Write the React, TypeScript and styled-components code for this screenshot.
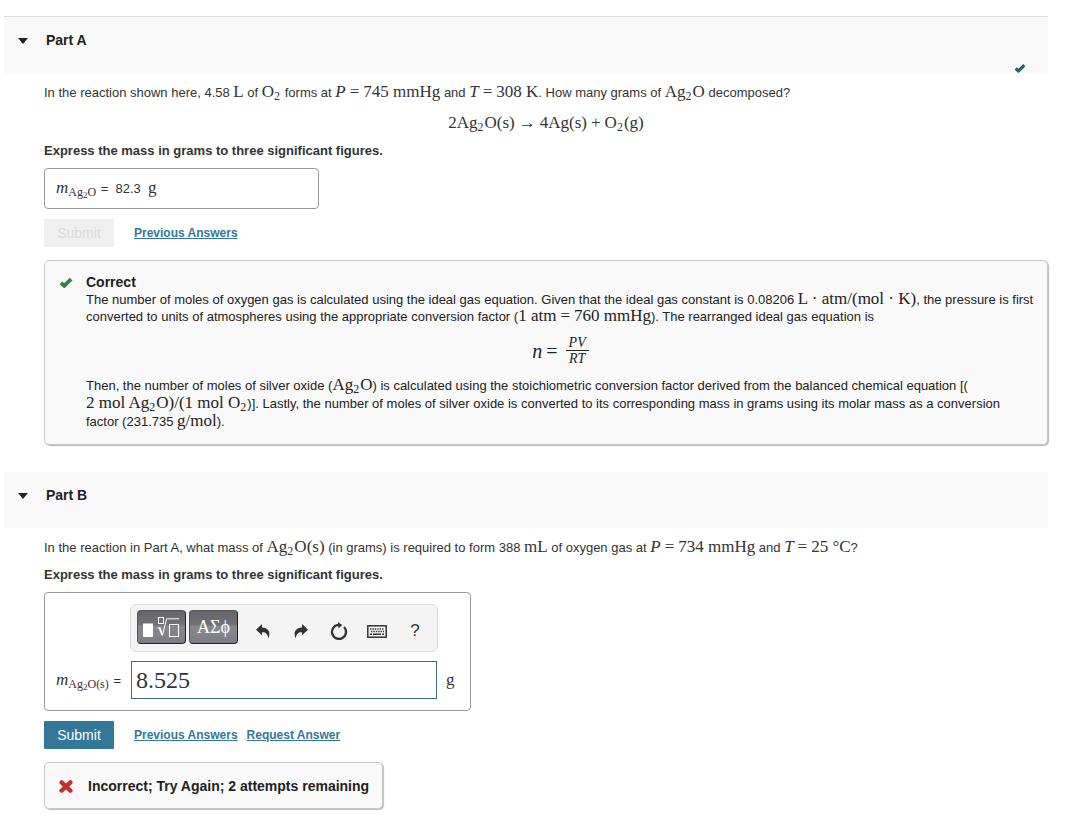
import React from 'react';
import styled, { createGlobalStyle, css } from 'styled-components';

const sans = '"Liberation Sans", Arial, sans-serif';
const serif = '"Liberation Serif", "Times New Roman", serif';

const GlobalStyle = createGlobalStyle`
  *, *::before, *::after { box-sizing: border-box; }
  body {
    margin: 0;
    background: #fff;
    color: #333;
    font: 13px/17px ${sans};
  }
  h2, h3, p { margin: 0; }
  button { font-family: inherit; cursor: pointer; }
`;

const Page = styled.main`
  padding: 16px 24px 20px 4px;
`;

const Part = styled.section`
  & + & { margin-top: 27px; }
`;

const PartHeader = styled.header<{ $ruled?: boolean }>`
  display: flex;
  align-items: flex-start;
  background: #f9f9f9;
  min-height: 56px;
  padding: 15px 22px 0 14px;
  ${p => p.$ruled && css`
    min-height: 57px;
    border-top: 1px solid #dcdcdc;
  `}
`;

const Toggle = styled.button`
  display: flex;
  align-items: center;
  gap: 17px;
  padding: 0;
  border: 0;
  background: none;
  color: #222;
  font-size: 14px;
  font-weight: bold;
  line-height: 17px;
`;

const HeaderMark = styled.span`
  display: flex;
  align-self: flex-end;
  margin-left: auto;
`;

const PartBody = styled.div`
  padding: 11px 0 0 40px;
`;

const Question = styled.p`
  margin-bottom: 10px;
`;

const Instruction = styled.p`
  font-weight: bold;
  margin-bottom: 9px;
`;

const MathText = styled.span`
  font-family: ${serif};
  font-size: 17px;
  line-height: 0;
  white-space: nowrap;
`;

const Equation = styled.div`
  display: flex;
  justify-content: center;
  align-items: center;
  font-family: ${serif};
  font-size: 17px;
  line-height: 18px;
  margin: 13px 0 10px;
`;

const Sub = styled.span`
  font-size: 12px;
  line-height: 0;
  vertical-align: -3px;
  margin-right: 1px;
`;

const SubSub = styled.span`
  font-size: 9px;
  line-height: 0;
  vertical-align: -2px;
`;

const Op = styled.span`
  padding: 0 4px;
`;

const AnswerBox = styled.div`
  display: flex;
  align-items: center;
  width: 275px;
  max-width: 100%;
  height: 41px;
  padding: 0 11px;
  border: 1px solid #999;
  border-radius: 4px;
  white-space: pre;
`;

const EditorBox = styled.div`
  display: inline-grid;
  grid-template-columns: 66px 308px auto;
  align-items: center;
  gap: 9px 8px;
  padding: 11px 15px 11px 11px;
  border: 1px solid #999;
  border-radius: 4px;
  vertical-align: top;
`;

const EditorLabel = styled.label`
  grid-column: 1;
  white-space: nowrap;
`;

const Toolbar = styled.div`
  grid-column: 2;
  display: flex;
  height: 48px;
  padding: 5px 0 5px 6px;
  background: #f4f4f4;
  border: 1px solid #dedede;
  border-radius: 6px;
`;

const PaletteButton = styled.button`
  flex: none;
  display: flex;
  align-items: center;
  justify-content: center;
  width: 49px;
  height: 34px;
  padding: 0;
  margin-right: 3px;
  border: 1px solid #555;
  border-right-color: #222;
  border-bottom-color: #222;
  border-radius: 4px;
  background: linear-gradient(#66666a, #727277 45%, #88888e 46%, #7d7d84);
  color: #fff;
  font: 18px/20px ${serif};
`;

const Tools = styled.div`
  display: flex;
  margin-left: 3px;
`;

const ToolButton = styled.button`
  flex: none;
  display: flex;
  align-items: center;
  justify-content: center;
  width: 38px;
  height: 34px;
  padding: 8px 0 0;
  border: 0;
  background: none;
  color: #333;
  font-size: 17px;
  line-height: 20px;
`;

const AnswerInput = styled.input`
  width: 306px;
  height: 38px;
  padding: 0 4px;
  margin-left: 1px;
  border: 1px solid #3b6f8c;
  background: #fff;
  color: #333;
  font: 24px/28px ${serif};
  outline: none;
`;

const Actions = styled.div`
  display: flex;
  align-items: center;
  gap: 9px;
  margin: 10px 0 13px;
`;

const SubmitButton = styled.button`
  width: 70px;
  height: 28px;
  padding: 0;
  margin-right: 11px;
  border: 0;
  border-radius: 1px;
  background: #347899;
  color: #fff;
  font-size: 14px;
  &:disabled {
    background: #f0f0f0;
    color: #dadada;
  }
`;

const ActionLink = styled.a`
  color: #347899;
  font-size: 12px;
  font-weight: bold;
  text-decoration: underline;
`;

const panel = css`
  background: #f9f9f9;
  border: 1px solid #c6c6c6;
  border-radius: 5px;
  box-shadow: 1px 1px 1px #bbb;
`;

const Feedback = styled.div`
  ${panel}
  display: flex;
  gap: 13px;
  padding: 13px 12px 13px 14px;
  color: #222;
`;

const FeedbackMark = styled.span`
  flex: none;
  display: flex;
  align-items: center;
  height: 16px;
`;

const FeedbackText = styled.div`
  flex: 1;
  min-width: 0;
`;

const FeedbackTitle = styled.h3`
  font-size: 14px;
  line-height: 17px;
`;

const FeedbackConclusion = styled.p`
  line-height: 18px;
`;

const FeedbackEquation = styled(Equation)`
  margin: 8px 0 9px;
  height: 35px;
  font-size: 20px;
`;

const Fraction = styled.span`
  display: inline-flex;
  flex-direction: column;
  align-items: center;
  margin-left: 4px;
  font-size: 14px;
  line-height: 15px;
  font-style: italic;
`;

const Numerator = styled.span`
  padding: 0 3px;
  border-bottom: 1px solid #222;
`;

const RetryNotice = styled.div`
  ${panel}
  display: inline-flex;
  align-items: center;
  gap: 15px;
  height: 47px;
  padding: 1px 13px 0 14px;
  color: #222;
  font-size: 14px;
  font-weight: bold;
`;

const Caret = () => (
  <svg width="11" height="6" viewBox="0 0 11 6" aria-hidden="true">
    <path d="M0 0H10L5 6Z" fill="#222" />
  </svg>
);

const Check = ({ width, height, color }: { width: number; height: number; color: string }) => (
  <svg width={width} height={height} viewBox="0 0 14 11" aria-hidden="true">
    <path d="M1.9 5.9L5.2 8.9L12.1 2.1" fill="none" stroke={color} strokeWidth="3.7" />
  </svg>
);

const Cross = () => (
  <svg width="14" height="13" viewBox="0 0 14 13" aria-hidden="true">
    <path d="M2.6 2.4L11.4 10.6M11.4 2.4L2.6 10.6" stroke="#c4302f" strokeWidth="4.4" strokeLinecap="round" />
  </svg>
);

const Undo = () => (
  <svg width="14" height="15" viewBox="0 0 14 15" aria-hidden="true">
    <path d="M6 0L0 5.8L6 11.3V8.2C9.6 8 11.6 9.6 12.4 14.5C14.8 8.6 12.8 3.7 6 3.4Z" fill="currentColor" />
  </svg>
);

const Redo = () => (
  <svg width="14" height="15" viewBox="0 0 14 15" aria-hidden="true">
    <path d="M8 0L14 5.8L8 11.3V8.2C4.4 8 2.4 9.6 1.6 14.5C-0.8 8.6 1.2 3.7 8 3.4Z" fill="currentColor" />
  </svg>
);

const Reset = () => (
  <svg width="18" height="18" viewBox="0 0 18 18" aria-hidden="true">
    <path d="M14 5A7 7 0 1 1 9 2.9" fill="none" stroke="currentColor" strokeWidth="2.3" />
    <path d="M7.8 0L12.2 3L8.6 6.4Z" fill="currentColor" />
  </svg>
);

const Keyboard = () => (
  <svg width="20" height="13" viewBox="0 0 20 13" aria-hidden="true">
    <rect x="0.8" y="0.8" width="18.4" height="11.4" fill="none" stroke="currentColor" strokeWidth="1.5" />
    <path d="M3 4H17M4 6.5H17" stroke="currentColor" strokeWidth="1.4" strokeDasharray="1.4 1" />
    <path d="M3 9.3H5M6 9.3H14M15 9.3H17" stroke="currentColor" strokeWidth="1.5" />
  </svg>
);

const Templates = () => (
  <svg width="37" height="22" viewBox="0 0 37 22" aria-hidden="true">
    <rect x="0" y="7.5" width="10" height="13.5" fill="#fff" />
    <g fill="none" stroke="#fff">
      <rect x="15.5" y="1.5" width="5" height="6" />
      <path d="M14.5 12.5L16.5 11.5" />
      <path d="M16.5 11.5L19.2 18.8" strokeWidth="2" />
      <path d="M19.4 19.5L23.6 2.8H36" />
      <rect x="26.5" y="8.5" width="9" height="12" />
    </g>
  </svg>
);

const Ag2O = () => (
  <>Ag<Sub>2</Sub>O</>
);

const O2 = () => (
  <>O<Sub>2</Sub></>
);

const MassSymbol = ({ state }: { state?: string }) => (
  <MathText>
    <i>m</i>
    <Sub>Ag<SubSub>2</SubSub>O{state}</Sub>
  </MathText>
);

export default function App() {
  return (
    <>
      <GlobalStyle />
      <Page>
        <Part>
          <PartHeader $ruled>
            <h2>
              <Toggle type="button" aria-expanded="true"><Caret />Part A</Toggle>
            </h2>
            <HeaderMark><Check width={12} height={10} color="#2b5d76" /></HeaderMark>
          </PartHeader>
          <PartBody>
            <Question>
              In the reaction shown here, 4.58 <MathText>L</MathText> of <MathText><O2 /></MathText> forms at{' '}
              <MathText><i>P</i><Op>=</Op>745 mmHg</MathText> and{' '}
              <MathText><i>T</i><Op>=</Op>308 K</MathText>. How many grams of{' '}
              <MathText><Ag2O /></MathText> decomposed?
            </Question>
            <Equation>
              <span>
                2<Ag2O />(s)<Op>→</Op>4Ag(s)<Op>+</Op><O2 />(g)
              </span>
            </Equation>
            <Instruction>Express the mass in grams to three significant figures.</Instruction>
            <AnswerBox>
              <span><MassSymbol /> =  82.3  <MathText>g</MathText></span>
            </AnswerBox>
            <Actions>
              <SubmitButton type="button" disabled>Submit</SubmitButton>
              <ActionLink href="#part-a-answers">Previous Answers</ActionLink>
            </Actions>
            <Feedback>
              <FeedbackMark><Check width={14} height={11} color="#3a7d44" /></FeedbackMark>
              <FeedbackText>
                <FeedbackTitle>Correct</FeedbackTitle>
                <p>
                  The number of moles of oxygen gas is calculated using the ideal gas equation. Given that the ideal gas
                  constant is 0.08206 <MathText>L · atm/(mol · K)</MathText>, the pressure is first converted to units of
                  atmospheres using the appropriate conversion factor (<MathText>1 atm<Op>=</Op>760 mmHg</MathText>). The
                  rearranged ideal gas equation is
                </p>
                <FeedbackEquation>
                  <i>n</i><Op>=</Op>
                  <Fraction><Numerator>PV</Numerator><span>RT</span></Fraction>
                </FeedbackEquation>
                <FeedbackConclusion>
                  Then, the number of moles of silver oxide (<MathText><Ag2O /></MathText>) is calculated using the
                  stoichiometric conversion factor derived from the balanced chemical equation [(<br />
                  <MathText>2 mol <Ag2O />)/(1 mol <O2 /></MathText>)]. Lastly, the number of moles of silver oxide is
                  converted to its corresponding mass in grams using its molar mass as a conversion factor (231.735{' '}
                  <MathText>g/mol</MathText>).
                </FeedbackConclusion>
              </FeedbackText>
            </Feedback>
          </PartBody>
        </Part>

        <Part>
          <PartHeader>
            <h2>
              <Toggle type="button" aria-expanded="true"><Caret />Part B</Toggle>
            </h2>
          </PartHeader>
          <PartBody>
            <Question>
              In the reaction in Part A, what mass of <MathText><Ag2O />(s)</MathText> (in grams) is required to form 388{' '}
              <MathText>mL</MathText> of oxygen gas at <MathText><i>P</i><Op>=</Op>734 mmHg</MathText> and{' '}
              <MathText><i>T</i><Op>=</Op>25 °C</MathText>?
            </Question>
            <Instruction>Express the mass in grams to three significant figures.</Instruction>
            <EditorBox>
              <Toolbar role="toolbar" aria-label="Equation tools">
                <PaletteButton type="button" aria-label="Templates"><Templates /></PaletteButton>
                <PaletteButton type="button">ΑΣϕ</PaletteButton>
                <Tools>
                  <ToolButton type="button" aria-label="Undo"><Undo /></ToolButton>
                  <ToolButton type="button" aria-label="Redo"><Redo /></ToolButton>
                  <ToolButton type="button" aria-label="Reset"><Reset /></ToolButton>
                  <ToolButton type="button" aria-label="Keyboard shortcuts"><Keyboard /></ToolButton>
                  <ToolButton type="button">?</ToolButton>
                </Tools>
              </Toolbar>
              <EditorLabel htmlFor="mass"><MassSymbol state="(s)" /> =</EditorLabel>
              <AnswerInput id="mass" defaultValue="8.525" />
              <MathText>g</MathText>
            </EditorBox>
            <Actions>
              <SubmitButton type="button">Submit</SubmitButton>
              <ActionLink href="#part-b-answers">Previous Answers</ActionLink>
              <ActionLink href="#part-b-request">Request Answer</ActionLink>
            </Actions>
            <RetryNotice role="status">
              <Cross />Incorrect; Try Again; 2 attempts remaining
            </RetryNotice>
          </PartBody>
        </Part>
      </Page>
    </>
  );
}
